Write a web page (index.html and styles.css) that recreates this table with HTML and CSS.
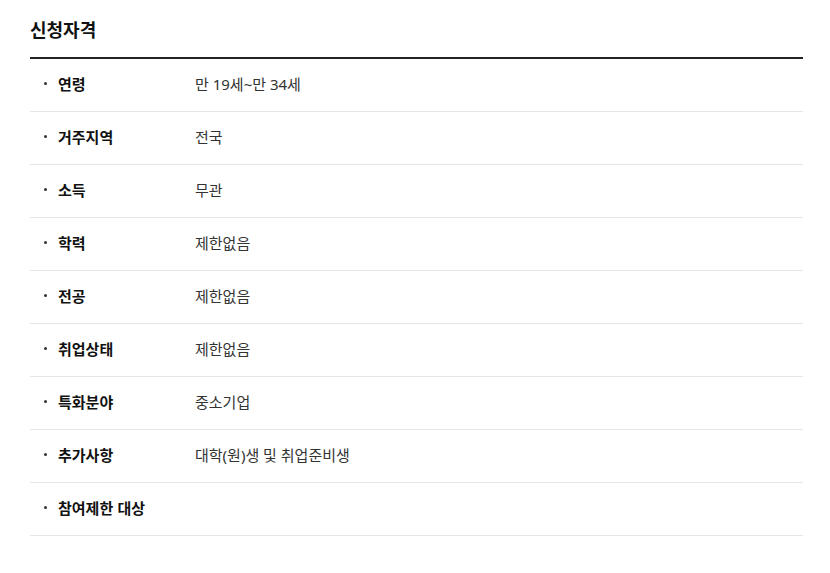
FILE: index.html
```html
<!DOCTYPE html>
<html lang="ko">
<head>
<meta charset="utf-8">
<link rel="stylesheet" href="styles.css">
</head>
<body>
<section class="qual">
  <h2 class="qual-title">신청자격</h2>
  <ul class="qual-list">
    <li class="qual-row"><span class="qual-label">연령</span><span class="qual-value">만 19세~만 34세</span></li>
    <li class="qual-row"><span class="qual-label">거주지역</span><span class="qual-value">전국</span></li>
    <li class="qual-row"><span class="qual-label">소득</span><span class="qual-value">무관</span></li>
    <li class="qual-row"><span class="qual-label">학력</span><span class="qual-value">제한없음</span></li>
    <li class="qual-row"><span class="qual-label">전공</span><span class="qual-value">제한없음</span></li>
    <li class="qual-row"><span class="qual-label">취업상태</span><span class="qual-value">제한없음</span></li>
    <li class="qual-row"><span class="qual-label">특화분야</span><span class="qual-value">중소기업</span></li>
    <li class="qual-row"><span class="qual-label">추가사항</span><span class="qual-value">대학(원)생 및 취업준비생</span></li>
    <li class="qual-row"><span class="qual-label">참여제한 대상</span><span class="qual-value"></span></li>
  </ul>
</section>
</body>
</html>
```
FILE: styles.css
```css
* { box-sizing: border-box; }
body {
  margin: 0;
  background: #fff;
  font-family: "Noto Sans CJK KR", "Noto Sans", sans-serif;
  color: #111;
}
.qual {
  padding: 0 27px 0 30px;
}
.qual-title {
  margin: 16px 0 15px;
  font-size: 18px;
  line-height: 26px;
  font-weight: 700;
  color: #111;
}
.qual-list {
  list-style: none;
  margin: 0;
  padding: 0;
  border-top: 2px solid #222;
}
.qual-row {
  display: flex;
  align-items: center;
  height: 53px;
  padding-bottom: 3px;
  border-bottom: 1px solid #e6e6e6;
  font-size: 15px;
  line-height: 20px;
}
.qual-label {
  display: flex;
  align-items: center;
  width: 165px;
  flex: none;
  padding-left: 14px;
  font-weight: 700;
  color: #111;
}
.qual-label::before {
  content: "";
  width: 3px;
  height: 3px;
  border-radius: 50%;
  background: #333;
  margin-right: 11px;
  flex: none;
}
.qual-value {
  font-family: "Noto Sans", "Noto Sans CJK KR", sans-serif;
  color: #333;
}
```
